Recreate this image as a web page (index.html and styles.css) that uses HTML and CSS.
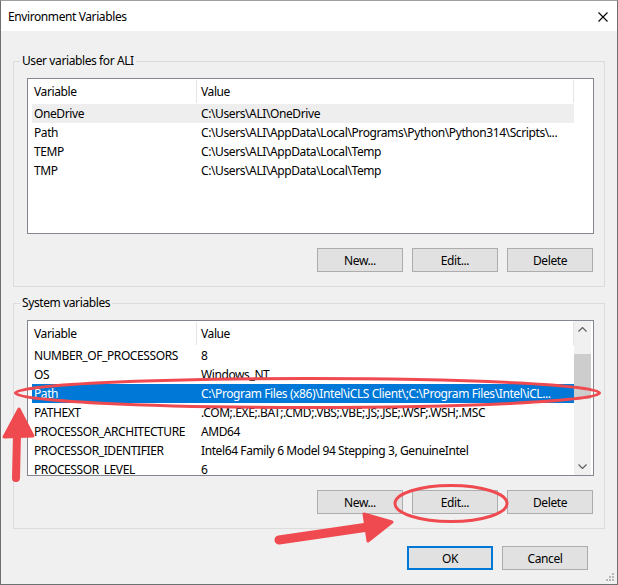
FILE: index.html
```html
<html>
    <head>
        <link rel="stylesheet" href="styles.css">
    </head>
    <body>
        <div class="window">
            <div class="titlebar">
                <div class="title">Environment Variables</div>
                <svg class="close" width="10" height="10" viewBox="0 0 10 10">
                    <path d="M0.5 0.5 L9.5 9.5 M9.5 0.5 L0.5 9.5" stroke="#000" stroke-width="1.1" fill="none"/>
                </svg>
            </div>
            <div class="content">
                <fieldset class="group">
                    <legend>User variables for ALI</legend>
                    <div class="list">
                        <div class="table">
                            <div class="head">
                                <div class="cell">Variable</div>
                                <div class="cell">Value</div>
                            </div>
                            <div class="row hover"><div class="cell">OneDrive</div><div class="cell">C:\Users\ALI\OneDrive</div></div>
                            <div class="row"><div class="cell">Path</div><div class="cell">C:\Users\ALI\AppData\Local\Programs\Python\Python314\Scripts\...</div></div>
                            <div class="row"><div class="cell">TEMP</div><div class="cell">C:\Users\ALI\AppData\Local\Temp</div></div>
                            <div class="row"><div class="cell">TMP</div><div class="cell">C:\Users\ALI\AppData\Local\Temp</div></div>
                        </div>
                        <div class="no-scroll"></div>
                    </div>
                    <div class="buttons">
                        <button>New...</button>
                        <button>Edit...</button>
                        <button>Delete</button>
                    </div>
                </fieldset>

                <fieldset class="group system">
                    <legend>System variables</legend>
                    <div class="list">
                        <div class="table">
                            <div class="head">
                                <div class="cell">Variable</div>
                                <div class="cell">Value</div>
                            </div>
                            <div class="row"><div class="cell">NUMBER_OF_PROCESSORS</div><div class="cell">8</div></div>
                            <div class="row"><div class="cell">OS</div><div class="cell">Windows_NT</div></div>
                            <div class="row selected"><div class="cell">Path</div><div class="cell">C:\Program Files (x86)\Intel\iCLS Client\;C:\Program Files\Intel\iCL...</div></div>
                            <div class="row"><div class="cell">PATHEXT</div><div class="cell">.COM;.EXE;.BAT;.CMD;.VBS;.VBE;.JS;.JSE;.WSF;.WSH;.MSC</div></div>
                            <div class="row"><div class="cell">PROCESSOR_ARCHITECTURE</div><div class="cell">AMD64</div></div>
                            <div class="row"><div class="cell">PROCESSOR_IDENTIFIER</div><div class="cell">Intel64 Family 6 Model 94 Stepping 3, GenuineIntel</div></div>
                            <div class="row"><div class="cell">PROCESSOR_LEVEL</div><div class="cell">6</div></div>
                        </div>
                        <div class="scrollbar">
                            <div class="arrow">
                                <svg width="9" height="5" viewBox="0 0 9 5"><path d="M0.5 4.5 L4.5 0.5 L8.5 4.5" stroke="#606060" stroke-width="1.2" fill="none"/></svg>
                            </div>
                            <div class="track"><div class="thumb"></div></div>
                            <div class="arrow">
                                <svg width="9" height="5" viewBox="0 0 9 5"><path d="M0.5 0.5 L4.5 4.5 L8.5 0.5" stroke="#606060" stroke-width="1.2" fill="none"/></svg>
                            </div>
                        </div>
                    </div>
                    <div class="buttons">
                        <button>New...</button>
                        <button>Edit...</button>
                        <button>Delete</button>
                    </div>
                </fieldset>

                <div class="footer">
                    <button class="default">OK</button>
                    <button>Cancel</button>
                </div>
            </div>

            <!-- resize grip -->
            <svg class="grip" width="9" height="9" viewBox="0 0 9 9" fill="#b8b8b8">
                <rect x="6" y="0" width="2" height="2"/>
                <rect x="3" y="3" width="2" height="2"/><rect x="6" y="3" width="2" height="2"/>
                <rect x="0" y="6" width="2" height="2"/><rect x="3" y="6" width="2" height="2"/><rect x="6" y="6" width="2" height="2"/>
            </svg>

            <!-- red annotations drawn on top of the screenshot -->
            <svg class="marks" width="618" height="585" viewBox="0 0 618 585">
                <g stroke="#ef4a4f" fill="none" stroke-width="3">
                    <ellipse cx="307.5" cy="393" rx="292" ry="14.5"/>
                    <ellipse cx="451" cy="503.5" rx="56" ry="18"/>
                </g>
                <g stroke="#ef4a4f" fill="#ef4a4f" stroke-linecap="round" stroke-linejoin="round">
                    <line x1="17" y1="434" x2="16" y2="478" stroke-width="8"/>
                    <polygon points="19,409 33,436 4,437" stroke-width="3"/>
                    <line x1="279" y1="540" x2="368" y2="527" stroke-width="9"/>
                    <polygon points="364,514 392,522 368,541" stroke-width="3"/>
                </g>
            </svg>
        </div>
    </body>
</html>
```

FILE: styles.css
```css
body {
    margin: 0;
    font-family: "Noto Sans", sans-serif;
    font-size: 12px;
    letter-spacing: -0.4px;
    color: #000;
    background: #f0f0f0;
}
.window {
    position: relative;
    width: 618px;
    height: 585px;
    box-sizing: border-box;
    border: 1px solid #6f6f6f;
    border-top-color: #a0a0a0;
    background: #f0f0f0;
    overflow: hidden;
}
.titlebar {
    height: 30px;
    background: #fff;
    display: flex;
    align-items: center;
    justify-content: space-between;
    padding: 0 9px 0 7px;
}
.title {
    font-size: 12px;
    margin-top: 1px;
}
.close {
    margin-top: 1px;
}
.content {
    padding: 22px 12px 0 12px;
}
.group {
    margin: 0;
    border: 1px solid #dcdcdc;
    padding: 9px 10px 14px 13px;
}
.group legend {
    margin-left: -7px;
    padding: 0 2px;
    line-height: 16px;
}
.group.system {
    margin-top: 8px;
}
.list {
    height: 156px;
    box-sizing: border-box;
    border: 1px solid #828790;
    background: #fff;
    padding: 0 2px 0 4px;
    display: flex;
    overflow: hidden;
}
.table {
    width: 542px;
}
.no-scroll {
    width: 17px;
}
.head, .row {
    display: grid;
    grid-template-columns: 165px 377px;
}
.head {
    height: 25px;
    line-height: 25px;
}
.head .cell {
    border-right: 1px solid #e5e5e5;
    margin-top: 1px;
    height: 23px;
    line-height: 24px;
}
.row {
    height: 19px;
    line-height: 19px;
}
.cell {
    white-space: nowrap;
    overflow: hidden;
    padding-left: 2px;
}
.cell + .cell {
    padding-left: 4px;
}
.row.hover {
    background: #eeeeee;
}
.row.selected {
    background: #0078d7;
    color: #fff;
}
.scrollbar {
    width: 17px;
    background: #f0f0f0;
    display: flex;
    flex-direction: column;
}
.scrollbar .arrow {
    height: 17px;
    display: flex;
    align-items: center;
    justify-content: center;
}
.scrollbar .track {
    flex: 1;
    padding-top: 16px;
}
.scrollbar .thumb {
    height: 45px;
    background: #cdcdcd;
}
.buttons, .footer {
    display: flex;
    justify-content: flex-end;
    gap: 9px;
}
.buttons {
    margin-top: 14px;
    padding-right: 1px;
}
button {
    width: 86px;
    height: 24px;
    margin: 0;
    padding: 0;
    background: #e1e1e1;
    border: 1px solid #adadad;
    font-family: "Noto Sans", sans-serif;
    font-size: 12px;
    letter-spacing: -0.4px;
    color: #000;
}
button.default {
    border: 2px solid #0078d7;
}
.footer {
    margin-top: 17px;
    padding-right: 17px;
}
.grip {
    position: absolute;
    right: 2px;
    bottom: 2px;
}
.marks {
    position: absolute;
    left: -1px;
    top: -1px;
    pointer-events: none;
}
```
